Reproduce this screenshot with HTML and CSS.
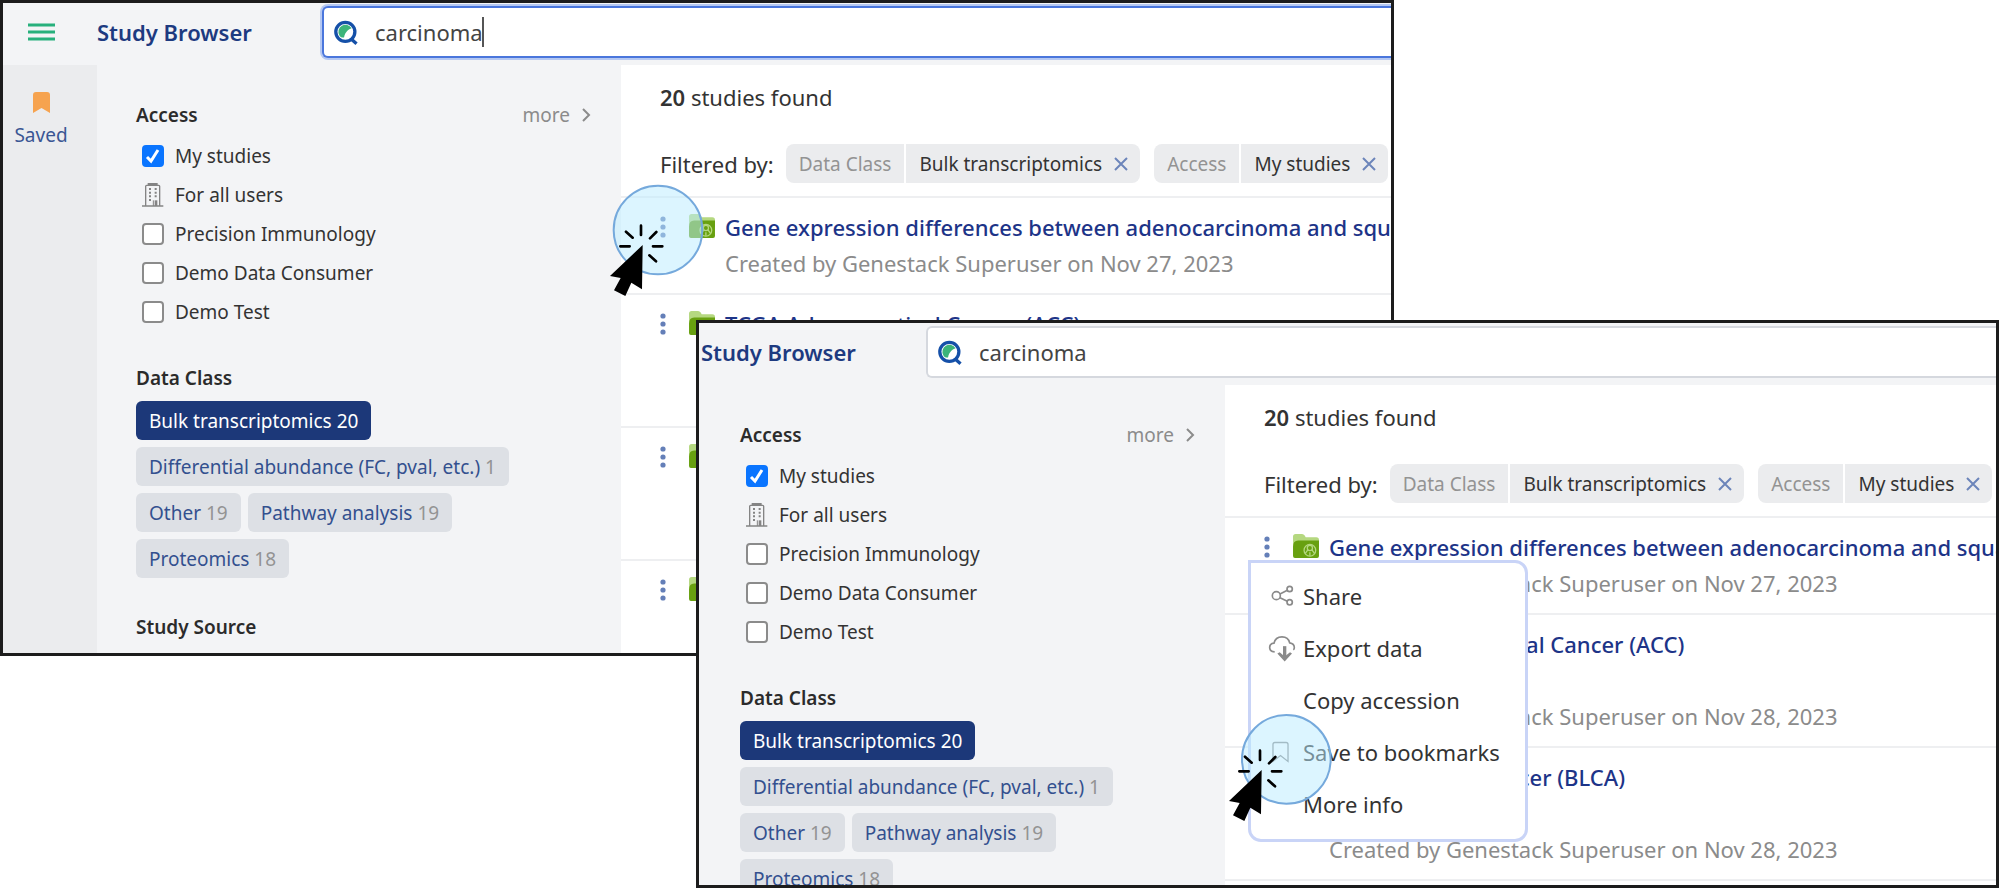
FILE: index.html
```html
<!DOCTYPE html>
<html lang="en">
<head>
<meta charset="utf-8">
<title>Study Browser</title>
<link rel="stylesheet" href="styles.css">
</head>
<body>
<svg class="sprite" aria-hidden="true">
  <symbol id="search" viewBox="0 0 72 76">
    <path d="M16 47A20 20 0 1 1 53 25C44 29 34 34 30 53C23 54 19 52 16 47Z" fill="#3cb47a"/>
    <circle cx="34" cy="36" r="29" fill="none" stroke="#1550a8" stroke-width="10"/>
    <path d="M50 56L68 72" stroke="#1550a8" stroke-width="10"/>
  </symbol>
  <symbol id="folder" viewBox="0 0 80 74">
    <path d="M0 8Q0 0 8 0H28Q33 0 36 5L39 10H72Q80 10 80 18V40H0Z" fill="#b5d880"/>
    <path d="M0 40Q0 20 16 20H80V68Q80 74 74 74H6Q0 74 0 68Z" fill="#68a010"/>
    <g fill="none" stroke="#b5d880" stroke-width="4">
      <circle cx="52" cy="50" r="18"/>
      <circle cx="52" cy="43" r="8"/>
      <path d="M46 48L38 60M58 48L66 60M52 56V67"/>
    </g>
  </symbol>
  <symbol id="dots" viewBox="0 0 6 22">
    <g fill="#647fb8"><circle cx="3" cy="3" r="2.6"/><circle cx="3" cy="11" r="2.6"/><circle cx="3" cy="19" r="2.6"/></g>
  </symbol>
  <symbol id="building" viewBox="0 0 66 72">
    <g fill="none" stroke="#848484" stroke-width="4">
      <path d="M11 69V10Q11 7 14 7H50Q53 7 53 10V69M0 69H64"/>
      <path d="M17 3H47" stroke-width="6"/>
      <path d="M42 69V52" stroke-width="8"/>
      <path d="M34 69V52" stroke-width="3"/>
    </g>
    <path d="M21 15h6v6h-6zM38 15h6v6h-6zM21 26h6v6h-6zM38 26h6v6h-6zM21 37h6v6h-6zM38 37h6v6h-6zM21 48h6v6h-6z" fill="#848484"/>
  </symbol>
  <symbol id="chevron" viewBox="0 0 9 14"><path d="M1 1L7 7L1 13" fill="none" stroke="#8b8b8b" stroke-width="2"/></symbol>
  <symbol id="cross" viewBox="0 0 14 14"><path d="M1 1L13 13M13 1L1 13" fill="none" stroke="#6c85ba" stroke-width="2"/></symbol>
  <symbol id="share" viewBox="0 0 72 72">
    <g fill="none" stroke="#8a8a8a" stroke-width="5">
      <circle cx="19" cy="35" r="12"/><circle cx="59" cy="15" r="8"/><circle cx="59" cy="55" r="8"/>
      <path d="M30 30L52 19M30 41L52 52"/>
    </g>
  </symbol>
  <symbol id="export" viewBox="0 0 84 80">
    <path d="M20 50Q5 49 5 37Q5 25 18 24Q22 5 42 5Q61 5 65 23Q79 25 79 38Q79 42 76 44" fill="none" stroke="#8a8a8a" stroke-width="5"/>
    <path d="M50 33V66" stroke="#8a8a8a" stroke-width="10"/>
    <path d="M28 55L35 51L50 64L66 51L72 55L50 79Z" fill="#8a8a8a"/>
  </symbol>
  <symbol id="bookmark" viewBox="0 0 52 64">
    <path d="M3 61V9Q3 3 9 3H43Q49 3 49 9V61L26 43Z" fill="none" stroke="#8a8a8a" stroke-width="4"/>
  </symbol>
  <symbol id="pointer" viewBox="0 0 330 375">
    <g stroke="#000" stroke-width="8" stroke-linecap="round">
      <path d="M105 149V177M60 167L80 185M151 168L132 187M43 211H71M141 211H169M130 238L150 256"/>
    </g>
    <path d="M110 207L108 340L76 320L58 360L24 343L44 306L12 300Z" fill="#000"/>
  </symbol>
</svg>

<div class="desktop">
  <section class="window window-first">
    <header class="header">
      <button class="hamburger" type="button" aria-label="Menu"><svg viewBox="0 0 27 18"><path d="M0 2H27M0 9H27M0 16H27" stroke="#27b07c" stroke-width="3"/></svg></button>
      <h1 class="app-title">Study Browser</h1>
      <label class="search search-active"><svg class="search-icon"><use href="#search"/></svg><span class="caret-box"><input class="search-input" type="text" value="carcinoma" aria-label="Search"><span class="caret"></span></span></label>
    </header>
    <div class="body">
      <nav class="rail">
        <a class="saved" href="#saved"><svg class="saved-icon" viewBox="0 0 17 21"><path d="M0 21V3Q0 0 3 0H14Q17 0 17 3V21L8.500 16Z" fill="#f6a34f"/></svg>Saved</a>
      </nav>
      <aside class="panel">
        <div class="group-head"><h2 class="group-title">Access</h2><button class="more" type="button">more<svg class="chevron"><use href="#chevron"/></svg></button></div>
        <div class="options">
          <label class="option"><input class="box" type="checkbox" checked>My studies</label>
          <div class="option"><svg class="building"><use href="#building"/></svg>For all users</div>
          <label class="option"><input class="box" type="checkbox">Precision Immunology</label>
          <label class="option"><input class="box" type="checkbox">Demo Data Consumer</label>
          <label class="option"><input class="box" type="checkbox">Demo Test</label>
        </div>
        <h2 class="group-title">Data Class</h2>
        <div class="chips">
          <button class="chip chip-on" type="button">Bulk transcriptomics <span class="count">20</span></button>
          <button class="chip" type="button">Differential abundance (FC, pval, etc.) <span class="count">1</span></button>
          <button class="chip" type="button">Other <span class="count">19</span></button>
          <button class="chip" type="button">Pathway analysis <span class="count">19</span></button>
          <button class="chip" type="button">Proteomics <span class="count">18</span></button>
        </div>
        <h2 class="group-title">Study Source</h2>
      </aside>
      <main class="results">
        <p class="found"><b class="strong">20</b> studies found</p>
        <div class="filters">
          <span>Filtered by:</span>
          <div class="filter"><span class="filter-name">Data Class</span><span class="filter-value">Bulk transcriptomics<button class="remove" type="button" aria-label="Remove Bulk transcriptomics"><svg class="cross"><use href="#cross"/></svg></button></span></div>
          <div class="filter"><span class="filter-name">Access</span><span class="filter-value">My studies<button class="remove" type="button" aria-label="Remove My studies"><svg class="cross"><use href="#cross"/></svg></button></span></div>
        </div>
        <article class="study">
          <button class="kebab" type="button" aria-label="Actions"><svg class="dots"><use href="#dots"/></svg></button>
          <svg class="folder"><use href="#folder"/></svg>
          <div><a class="study-title" href="#s1">Gene expression differences between adenocarcinoma and squamous</a><p class="created">Created by Genestack Superuser on Nov 27, 2023</p></div>
          <svg class="click click-row" viewBox="0 0 330 375"><circle class="halo" cx="156" cy="162" r="133"/><use href="#pointer" width="330" height="375"/></svg>
        </article>
        <article class="study study-tall">
          <button class="kebab" type="button" aria-label="Actions"><svg class="dots"><use href="#dots"/></svg></button>
          <svg class="folder"><use href="#folder"/></svg>
          <div><a class="study-title" href="#s2">TCGA Adrenocortical Cancer (ACC)</a></div>
        </article>
        <article class="study study-tall">
          <button class="kebab" type="button" aria-label="Actions"><svg class="dots"><use href="#dots"/></svg></button>
          <svg class="folder"><use href="#folder"/></svg>
        </article>
        <article class="study study-tall">
          <button class="kebab" type="button" aria-label="Actions"><svg class="dots"><use href="#dots"/></svg></button>
          <svg class="folder"><use href="#folder"/></svg>
        </article>
      </main>
    </div>
  </section>

  <section class="window window-second">
    <header class="header">
      <h1 class="app-title">Study Browser</h1>
      <label class="search"><svg class="search-icon"><use href="#search"/></svg><input class="search-input" type="text" value="carcinoma" aria-label="Search"></label>
    </header>
    <div class="body">
      <aside class="panel">
        <div class="group-head"><h2 class="group-title">Access</h2><button class="more" type="button">more<svg class="chevron"><use href="#chevron"/></svg></button></div>
        <div class="options">
          <label class="option"><input class="box" type="checkbox" checked>My studies</label>
          <div class="option"><svg class="building"><use href="#building"/></svg>For all users</div>
          <label class="option"><input class="box" type="checkbox">Precision Immunology</label>
          <label class="option"><input class="box" type="checkbox">Demo Data Consumer</label>
          <label class="option"><input class="box" type="checkbox">Demo Test</label>
        </div>
        <h2 class="group-title">Data Class</h2>
        <div class="chips">
          <button class="chip chip-on" type="button">Bulk transcriptomics <span class="count">20</span></button>
          <button class="chip" type="button">Differential abundance (FC, pval, etc.) <span class="count">1</span></button>
          <button class="chip" type="button">Other <span class="count">19</span></button>
          <button class="chip" type="button">Pathway analysis <span class="count">19</span></button>
          <button class="chip" type="button">Proteomics <span class="count">18</span></button>
        </div>
      </aside>
      <main class="results">
        <p class="found"><b class="strong">20</b> studies found</p>
        <div class="filters">
          <span>Filtered by:</span>
          <div class="filter"><span class="filter-name">Data Class</span><span class="filter-value">Bulk transcriptomics<button class="remove" type="button" aria-label="Remove Bulk transcriptomics"><svg class="cross"><use href="#cross"/></svg></button></span></div>
          <div class="filter"><span class="filter-name">Access</span><span class="filter-value">My studies<button class="remove" type="button" aria-label="Remove My studies"><svg class="cross"><use href="#cross"/></svg></button></span></div>
        </div>
        <article class="study">
          <button class="kebab" type="button" aria-label="Actions"><svg class="dots"><use href="#dots"/></svg></button>
          <svg class="folder"><use href="#folder"/></svg>
          <div><a class="study-title" href="#s1">Gene expression differences between adenocarcinoma and squamous</a><p class="created">Created by Genestack Superuser on Nov 27, 2023</p></div>
          <div class="menu">
            <button class="menu-item" type="button"><svg class="icon-share"><use href="#share"/></svg><span class="menu-label">Share</span></button>
            <button class="menu-item" type="button"><svg class="icon-export"><use href="#export"/></svg><span class="menu-label">Export data</span></button>
            <button class="menu-item" type="button"><span class="menu-label">Copy accession</span></button>
            <button class="menu-item" type="button"><svg class="icon-bookmark"><use href="#bookmark"/></svg><span class="menu-label">Save to bookmarks</span></button>
            <button class="menu-item" type="button"><span class="menu-label">More info</span></button>
            <svg class="click click-menu" viewBox="0 0 330 375"><circle class="halo" cx="184" cy="175" r="133"/><use href="#pointer" width="330" height="375"/></svg>
          </div>
        </article>
        <article class="study study-tall">
          <button class="kebab" type="button" aria-label="Actions"><svg class="dots"><use href="#dots"/></svg></button>
          <svg class="folder"><use href="#folder"/></svg>
          <div><a class="study-title" href="#s2">TCGA Adrenocortical Cancer (ACC)</a><p class="created">Created by Genestack Superuser on Nov 28, 2023</p></div>
        </article>
        <article class="study study-tall">
          <button class="kebab" type="button" aria-label="Actions"><svg class="dots"><use href="#dots"/></svg></button>
          <svg class="folder"><use href="#folder"/></svg>
          <div><a class="study-title" href="#s3">TCGA Bladder Cancer (BLCA)</a><p class="created">Created by Genestack Superuser on Nov 28, 2023</p></div>
        </article>
        <article class="study study-tall"></article>
      </main>
    </div>
  </section>
</div>
</body>
</html>
```
FILE: styles.css
```css
*,
*::before,
*::after { box-sizing: border-box; }

body {
  margin: 0;
  background: #fff;
  color: #333;
  font-family: "Noto Sans", "Open Sans", sans-serif;
  font-size: 22px;
  line-height: 28px;
}

h1, h2, p { margin: 0; }
svg { display: block; flex: none; }

button {
  margin: 0;
  padding: 0;
  border: 0;
  background: none;
  color: inherit;
  font: inherit;
  cursor: pointer;
}

a { text-decoration: none; }
.sprite { position: absolute; width: 0; height: 0; }

/* Two overlapping windows share one grid */
.desktop {
  display: grid;
  grid-template-columns: minmax(0, 696fr) minmax(0, 698fr) minmax(0, 605fr);
  grid-template-rows: minmax(0, 320fr) minmax(0, 336fr) minmax(0, 232fr);
  height: 100vh;
}

.window {
  display: flex;
  flex-direction: column;
  overflow: hidden;
  border: 3px solid #1c1c1c;
  background: #f3f4f6;
}

.window-first { grid-area: 1 / 1 / 3 / 3; }
.window-second { grid-area: 2 / 2 / 4 / 4; z-index: 1; }

.header { display: flex; align-items: center; flex: none; height: 62px; padding-bottom: 4px; }
.hamburger { flex: none; width: 94px; padding-left: 25px; }
.hamburger svg { width: 27px; height: 18px; }

.app-title {
  flex: none;
  width: 225px;
  color: #1d3a80;
  font-size: 22px;
  font-weight: 600;
}

.window-second .app-title { width: 227px; padding-left: 2px; }

.search {
  display: flex;
  flex: 1;
  align-items: center;
  gap: 17px;
  height: 52px;
  padding-left: 10px;
  border: 2px solid #d5d8de;
  border-right: 0;
  border-radius: 6px 0 0 6px;
  background: #fff;
}

.search-active { border-color: #4a76dc; box-shadow: 0 0 0 2px #b5c8f2; }
.search-icon { width: 24px; height: 25px; }
.caret-box { display: flex; flex: 1; align-items: center; }
.caret { width: 2px; height: 30px; background: #555; }

.search-input {
  flex: 1;
  min-width: 0;
  padding: 0;
  border: 0;
  outline: 0;
  background: none;
  color: #444;
  font: inherit;
}

.caret-box .search-input { flex: none; width: 107px; }

.body { display: flex; flex: 1; min-height: 0; }
.rail { flex: none; width: 94px; background: #ebecee; }

.saved {
  display: flex;
  flex-direction: column;
  align-items: center;
  gap: 8px;
  padding: 27px 18px 0 0;
  color: #3a5694;
  font-size: 19px;
}

.saved-icon { width: 17px; height: 21px; }

.panel { flex: none; width: 524px; padding: 36px 30px 0 39px; font-size: 19px; }
.window-second .panel { width: 526px; padding-left: 41px; }
.group-head { display: flex; justify-content: space-between; }
.group-title { color: #2b2b2b; font-size: 19px; font-weight: 600; }
.more { display: flex; align-items: center; gap: 12px; color: #8b8b8b; }
.chevron { width: 9px; height: 14px; }

.options { margin: 7px 0 33px; }
.option { display: flex; align-items: center; gap: 11px; height: 39px; padding-left: 6px; }

.box {
  flex: none;
  width: 22px;
  height: 22px;
  margin: 0;
  border: 2px solid #8b8b8b;
  border-radius: 4px;
  appearance: none;
  background: #fff;
}

.box:checked {
  border-color: #0a75ff;
  background: #0a75ff url("data:image/svg+xml,%3Csvg xmlns='http://www.w3.org/2000/svg' viewBox='0 0 18 18'%3E%3Cpath d='M3 10L7 14L14 3' fill='none' stroke='white' stroke-width='3'/%3E%3C/svg%3E");
}

.building { width: 22px; height: 24px; }

.chips { display: flex; flex-wrap: wrap; gap: 7px; margin: 9px 0 35px; }

.chip {
  height: 39px;
  padding: 0 13px;
  border-radius: 6px;
  background: #dde0e5;
  color: #33508f;
  white-space: nowrap;
}

.count { color: #939393; }
.chip-on { background: #1c3879; color: #fff; }
.chip-on .count { color: inherit; }

.results { flex: 1; min-width: 0; padding-top: 18px; background: #fff; white-space: nowrap; }
.found { padding-left: 39px; }
.strong { font-weight: 600; }

.filters { display: flex; align-items: center; height: 39px; margin: 33px 0 13px; padding-left: 39px; }

.filter {
  display: flex;
  flex: none;
  gap: 2px;
  height: 39px;
  margin-left: 12px;
  font-size: 19px;
}

.filter + .filter { margin-left: 14px; }

.filter-name,
.filter-value { display: flex; align-items: center; padding: 0 13px; background: #ebecee; }
.filter-name { border-radius: 8px 0 0 8px; color: #939393; }
.filter-value { gap: 12px; padding-right: 12px; border-radius: 0 8px 8px 0; }
.cross { width: 14px; height: 14px; }

.study {
  display: flex;
  align-items: flex-start;
  position: relative;
  min-height: 97px;
  padding: 15px 0 15px 39px;
  border-top: 2px solid #eeeff1;
}

.study-tall { min-height: 133px; }
.kebab { display: flex; flex: none; align-items: center; width: 29px; height: 28px; }
.dots { width: 6px; height: 22px; }
.folder { width: 26px; height: 24px; margin: 1px 10px 0 0; }
.study-title { display: block; color: #1d3488; font-weight: 500; }
.created { margin-top: 8px; color: #8b8b8b; }
.study-tall .created { margin-top: 44px; }

.menu {
  position: absolute;
  top: 42px;
  left: 23px;
  z-index: 1;
  width: 280px;
  padding: 7px 0 9px;
  border: 3px solid #c9d4f7;
  border-radius: 0 13px 13px 13px;
  background: #fff;
}

.menu-item {
  display: grid;
  grid-template-columns: 35px auto;
  align-items: center;
  width: 100%;
  height: 52px;
  padding-left: 17px;
  text-align: left;
}

.menu-label { grid-column: 2; }
.icon-share { grid-column: 1; width: 24px; height: 24px; margin-left: 2px; }
.icon-export { grid-column: 1; width: 28px; height: 27px; }
.icon-bookmark { grid-column: 1; width: 17px; height: 22px; margin-left: 4px; }

.click { position: absolute; z-index: 2; width: 110px; height: 125px; overflow: visible; pointer-events: none; }
.click-row { top: -22px; left: -15px; }
.click-menu { top: 138px; left: -26px; }
.halo { fill: rgba(186, 235, 255, 0.5); stroke: #75a9dc; stroke-width: 6; }
```
